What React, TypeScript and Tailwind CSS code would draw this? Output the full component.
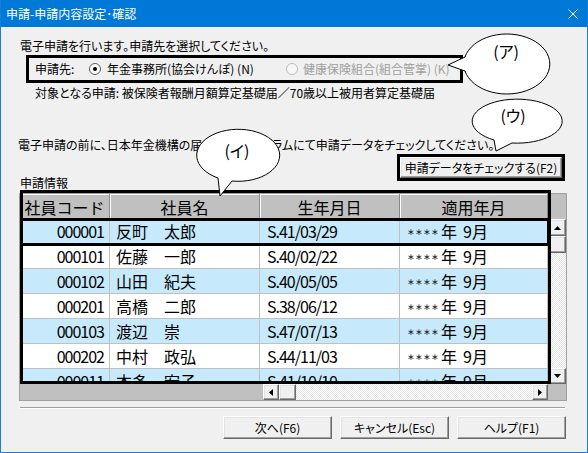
import React from "react";

const ui = "font-['Noto_Sans_CJK_JP',sans-serif] [font-feature-settings:'palt']";

type Row = { code: string; name: string; birth: string };

const rows: Row[] = [
  { code: "000001", name: "反町　太郎", birth: "S.41/03/29" },
  { code: "000101", name: "佐藤　一郎", birth: "S.40/02/22" },
  { code: "000102", name: "山田　紀夫", birth: "S.40/05/05" },
  { code: "000201", name: "高橋　二郎", birth: "S.38/06/12" },
  { code: "000103", name: "渡辺　崇", birth: "S.47/07/13" },
  { code: "000202", name: "中村　政弘", birth: "S.44/11/03" },
  { code: "000011", name: "本多　宏子", birth: "S.41/10/10" },
];

const raised =
  "bg-[#f0f0f0] border border-t-white border-l-white border-r-[#696969] border-b-[#696969] shadow-[inset_-1px_-1px_#a0a0a0,inset_1px_1px_#e3e3e3]";

function Radio({ checked, disabled }: { checked?: boolean; disabled?: boolean }) {
  return (
    <span
      className={`w-[12px] h-[12px] shrink-0 rounded-full border flex items-center justify-center ${
        disabled ? "border-[#bcbcbc] bg-[#f7f7f7]" : "border-[#5a5a5a] bg-white"
      }`}
    >
      {checked && <span className="w-[4px] h-[4px] rounded-full bg-black" />}
    </span>
  );
}

function Arrow({ dir }: { dir: "up" | "down" | "left" | "right" }) {
  const d = {
    up: "M3.5 0L7 4H0Z",
    down: "M0 0H7L3.5 4Z",
    left: "M4 0V7L0 3.5Z",
    right: "M0 0L4 3.5L0 7Z",
  }[dir];
  const vertical = dir === "up" || dir === "down";
  return (
    <svg width={vertical ? 7 : 4} height={vertical ? 4 : 7} viewBox={vertical ? "0 0 7 4" : "0 0 4 7"}>
      <path d={d} fill="#000" />
    </svg>
  );
}

const dither =
  "bg-[image:repeating-conic-gradient(#ffffff_0%_25%,#e4e4e4_0%_50%)] bg-[length:2px_2px]";

function Stars() {
  return (
    <span className="flex items-center">
      {[0, 1, 2, 3].map((i) => (
        <span
          key={i}
          className="w-[8px] text-center text-[9px] leading-none text-[#1e1e2c] translate-y-[1px] font-['DejaVu_Sans',sans-serif]"
        >
          ∗
        </span>
      ))}
    </span>
  );
}

function Grid() {
  return (
    <div className="relative mt-[2px] -ml-px w-[548px] h-[208px] border border-[#a0a0a0] flex bg-[#c0c0c0] font-['Noto_Sans_CJK_JP',sans-serif] [font-feature-settings:normal]">
      {/* columns */}
      <div className="w-[528px] flex flex-col">
        <div className="h-[25px] flex text-[16px] leading-none">
          {[
            ["社員コード", "w-[90px]"],
            ["社員名", "w-[150px]"],
            ["生年月日", "w-[140px]"],
            ["適用年月", "w-[148px]"],
          ].map(([label, w]) => (
            <div
              key={label}
              className={`${w} h-full flex items-center justify-center bg-[#c0c0c0] border-r border-r-[#8a8a8a] shadow-[inset_1px_1px_#ffffff]`}
            >
              {label}
            </div>
          ))}
        </div>
        <div className="h-[165px] overflow-hidden flex flex-col text-[16px] leading-none">
          {rows.map((r, i) => (
            <div
              key={r.code}
              className={`h-[25px] shrink-0 flex border-b border-[#c0c0c0] ${
                i % 2 === 0 ? "bg-[#c6eafb]" : "bg-white"
              }`}
            >
              <div className="w-[90px] flex items-center justify-end pr-[5px] tracking-[-1px] border-r border-[#c0c0c0]">
                {r.code}
              </div>
              <div className="w-[150px] flex items-center pl-[6px] border-r border-[#c0c0c0]">{r.name}</div>
              <div className="w-[140px] flex items-center pl-[7px] tracking-[-1px] border-r border-[#c0c0c0]">
                {r.birth}
              </div>
              <div className="w-[148px] flex items-center pl-[7px] border-r border-[#c0c0c0]">
                <Stars />
                <span className="ml-[2px]">年</span>
                <span className="ml-[6px]">9月</span>
              </div>
            </div>
          ))}
        </div>
        {/* horizontal scroll bar */}
        <div className="h-[16px] flex">
          <div className="w-[243px] bg-[#c0c0c0]" />
          <div className={`w-[16px] flex items-center justify-center ${raised}`}>
            <Arrow dir="left" />
          </div>
          <div className={`w-[17px] ${raised}`} />
          <div className={`flex-1 ${dither}`} />
          <div className={`w-[16px] flex items-center justify-center ${raised}`}>
            <Arrow dir="right" />
          </div>
        </div>
      </div>
      {/* vertical scroll bar */}
      <div className="w-[18px] flex flex-col bg-[#c0c0c0]">
        <div className="h-[25px] shrink-0" />
        <div className={`h-[17px] shrink-0 flex items-center justify-center ${raised}`}>
          <Arrow dir="up" />
        </div>
        <div className={`h-[17px] shrink-0 ${raised}`} />
        <div className={`h-[115px] shrink-0 ${dither}`} />
        <div className={`h-[16px] shrink-0 flex items-center justify-center ${raised}`}>
          <Arrow dir="down" />
        </div>
        <div className="h-[16px] shrink-0" />
      </div>

      {/* highlight frames drawn over the grid */}
      <div className="absolute left-0 top-[-4px] w-[531px] h-[194px] border-[3px] border-black pointer-events-none" />
      <div className="absolute left-0 top-[24px] w-[530px] h-[28px] border-[3px] border-black pointer-events-none" />
    </div>
  );
}

function Callouts() {
  const font = "'Noto Sans CJK JP', sans-serif";
  return (
    <svg className="absolute left-0 top-0 pointer-events-none" width="588" height="453" viewBox="0 0 588 453">
      <path d="M464 71 A43 30 0 1 0 464 57 L447 65 Z" fill="#fff" stroke="#000" strokeWidth="1" />
      <text x="505" y="58" textAnchor="middle" fontSize="16" fontFamily={font} fill="#000">
        (ア)
      </text>

      <path d="M231 181 A41.5 26 0 1 0 217 178 L219 196 Z" fill="#fff" stroke="#000" strokeWidth="1" />
      <text x="236" y="157" textAnchor="middle" fontSize="16" fontFamily={font} fill="#000">
        (イ)
      </text>

      <path d="M511 143 A45 22 0 1 0 493 140 L495 151 Z" fill="#fff" stroke="#000" strokeWidth="1" />
      <text x="512" y="122" textAnchor="middle" fontSize="16" fontFamily={font} fill="#000">
        (ウ)
      </text>
    </svg>
  );
}

export default function App() {
  return (
    <div
      className={`relative w-[588px] h-[453px] overflow-hidden bg-[#f0f0f0] border-x border-b border-[#1a7fd4] flex flex-col text-black ${ui}`}
    >
      {/* title bar */}
      <div className="h-[27px] shrink-0 bg-[#0078d7] flex items-center pl-[5px] pr-[9px] text-white text-[12px] leading-[16px]">
        <span className="flex-1">申請-申請内容設定･確認</span>
        <svg width="10" height="10" viewBox="0 0 10 10">
          <path d="M0.5 0.5L9.5 9.5M9.5 0.5L0.5 9.5" stroke="#fff" strokeWidth="1" />
        </svg>
      </div>

      <div className="flex flex-col pl-[19px] text-[12px] leading-[16px]">
        <div className="mt-[11px] h-[16px]">電子申請を行います。申請先を選択してください。</div>

        <div className="mt-[1px] ml-[6px] w-[437px] h-[28px] border-[3px] border-black flex items-center">
          <span className="w-[60px] pl-[6px] shrink-0">申請先:</span>
          <Radio checked />
          <span className="w-[185px] pl-[6px] shrink-0">年金事務所(協会けんぽ) (N)</span>
          <Radio disabled />
          <span className="pl-[5px] text-[#a0a0a0]">健康保険組合(組合管掌) (K)</span>
        </div>

        <div className="mt-[2px] ml-[15px] h-[16px]">
          対象となる申請: 被保険者報酬月額算定基礎届／70歳以上被用者算定基礎届
        </div>

        <div className="mt-[36px] -ml-[2px] h-[16px]">
          電子申請の前に、日本年金機構の届書作成プログラムにて申請データをチェックしてください。
        </div>

        <div className="mt-[1px] self-end mr-[22px] w-[168px] h-[27px] border-[3px] border-black flex">
          <div className={`flex-1 flex items-center justify-center ${raised}`}>申請データをチェックする(F2)</div>
        </div>

        <div className="-mt-[6px] h-[16px]">申請情報</div>

        <Grid />

        <div className="mt-[6px] w-[545px] h-[2px] border-t border-t-[#a0a0a0] border-b border-b-white" />

        <div className="mt-[7px] ml-[203px] flex gap-[8px]">
          <div className={`w-[109px] h-[23px] flex items-center justify-center ${raised}`}>次へ(F6)</div>
          <div className={`w-[109px] h-[23px] flex items-center justify-center ${raised}`}>キャンセル(Esc)</div>
          <div className={`w-[109px] h-[23px] flex items-center justify-center ${raised}`}>ヘルプ(F1)</div>
        </div>
      </div>

      <Callouts />
    </div>
  );
}
